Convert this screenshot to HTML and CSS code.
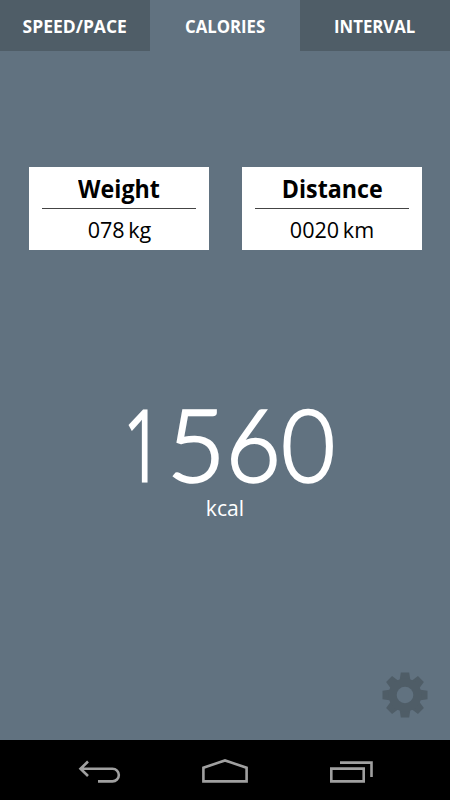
FILE: index.html
```
<!DOCTYPE html>
<html lang="en">
<head>
    <meta charset="UTF-8">
    <title>Calories</title>
    <link rel="stylesheet" href="styles.css">
</head>
<body>
<div class="tabs">
    <div class="tab"><span class="wide">SPEED/PACE</span></div>
    <div class="tab active"><span>CALORIES</span></div>
    <div class="tab"><span>INTERVAL</span></div>
</div>
<div class="main">
    <div class="cards">
        <div class="card">
            <div class="title"><span>Weight</span></div>
            <div class="value"><span>078 kg</span></div>
        </div>
        <div class="card">
            <div class="title"><span>Distance</span></div>
            <div class="value"><span>0020 km</span></div>
        </div>
    </div>
    <div class="result">
        <div class="number"><span class="one">1</span><span class="five">5</span><span class="six">6</span><span class="zero">0</span></div>
        <div class="unit"><span>kcal</span></div>
    </div>
    <svg class="gear" width="46" height="46" viewBox="-23 -23 46 46">
        <g fill="#4f5d67">
            <path id="tooth" d="M-4.2 -22.5H4.2L5.5 -14V14L4.2 22.5H-4.2L-5.5 14V-14Z"/>
            <use href="#tooth" transform="rotate(45)"/>
            <use href="#tooth" transform="rotate(90)"/>
            <use href="#tooth" transform="rotate(135)"/>
            <circle r="16.5"/>
        </g>
        <circle r="8.3" fill="#617280"/>
    </svg>
</div>
<div class="navbar">
    <svg width="450" height="60" viewBox="0 0 450 60" fill="none" stroke="#a0a0a0" stroke-width="2.6">
        <path d="M88 21.5L80.5 28.7L88 36M81 28.7H112.5A6.3 6.3 0 0 1 112.5 41.4H98"/>
        <path d="M203.4 41.4V27.8L225 20.4L246.6 27.8V41.4Z"/>
        <path d="M331.3 28.6H363.7V41.4H331.3ZM340 22.6H371.5V37"/>
    </svg>
</div>
</body>
</html>
```

FILE: styles.css
```
body {
    margin: 0;
    width: 450px;
    height: 800px;
    display: flex;
    flex-direction: column;
    background-color: #617280;
    font-family: "Open Sans", "Noto Sans", sans-serif;
    overflow: hidden;
}
.tabs {
    display: flex;
    height: 51px;
}
.tab {
    width: 150px;
    height: 51px;
    line-height: 52px;
    background-color: #4f5d67;
    color: white;
    text-align: center;
    font-size: 18px;
    font-weight: bold;
}
.tab.active {
    background-color: #617280;
}
.tab span, .title span, .value span, .unit span {
    display: inline-block;
    transform: scaleX(0.93);
    white-space: nowrap;
}
.tab .wide {
    transform: scaleX(0.97);
}
.main {
    flex: 1;
    display: flex;
    flex-direction: column;
}
.cards {
    display: flex;
    gap: 33px;
    padding: 116px 28px 0 29px;
}
.card {
    width: 180px;
    height: 83px;
    background-color: white;
    color: black;
    text-align: center;
}
.title {
    height: 41px;
    margin: 0 13px;
    line-height: 42px;
    border-bottom: 1px solid #444;
    font-size: 25px;
    font-weight: bold;
}
.value {
    height: 41px;
    line-height: 41px;
    font-size: 22px;
    word-spacing: -2px;
}
.value span {
    transform: scaleX(0.98);
}
.result {
    padding-top: 144px;
    color: white;
}
.number {
    display: flex;
    height: 100px;
    padding-left: 110px;
    font-family: Lato, sans-serif;
    font-size: 101px;
    font-weight: 300;
    line-height: 98px;
}
.number span {
    width: 58px;
    text-align: center;
    -webkit-text-stroke: 2.5px white;
}
.number .one {
    font-family: "Open Sans", sans-serif;
    font-size: 98px;
    transform: translateX(4px) scaleX(0.7);
    -webkit-text-stroke-width: 3.2px;
}
.number .five {
    transform: translateX(-1px);
}
.number .six {
    transform: translateX(-2px) scaleX(0.94);
}
.number .zero {
    transform: translateX(-5px) scaleX(0.92);
}
.unit {
    height: 32px;
    line-height: 27px;
    text-align: center;
    font-size: 22px;
}
.unit span {
    transform: scaleX(0.96);
}
.gear {
    margin: auto 22px 22px auto;
}
.navbar {
    height: 60px;
    background-color: black;
}
```
